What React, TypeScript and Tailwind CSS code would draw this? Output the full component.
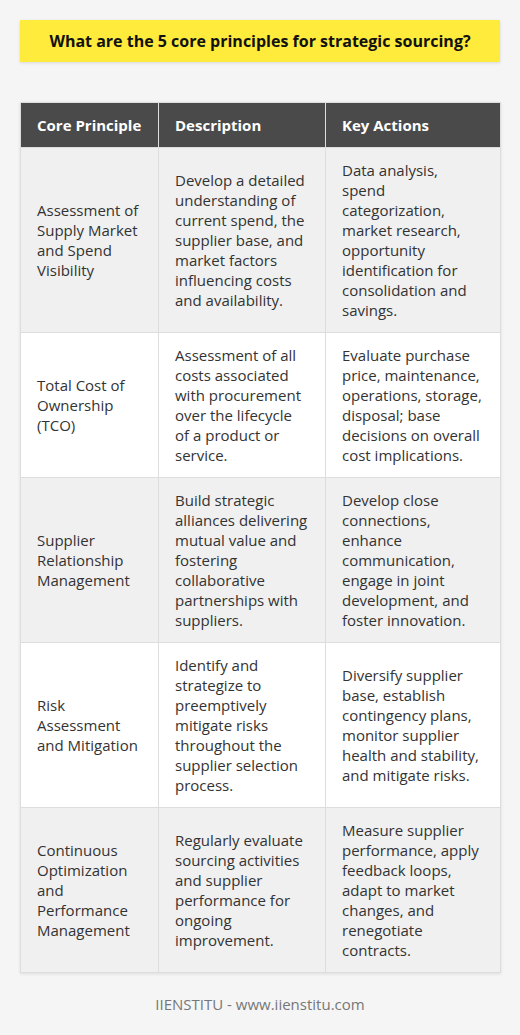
const rows = [
  {
    principle: 'Assessment of Supply Market and Spend Visibility',
    description:
      'Develop a detailed understanding of current spend, the supplier base, and market factors influencing costs and availability.',
    actions:
      'Data analysis, spend categorization, market research, opportunity identification for consolidation and savings.',
  },
  {
    principle: 'Total Cost of Ownership (TCO)',
    description:
      'Assessment of all costs associated with procurement over the lifecycle of a product or service.',
    actions:
      'Evaluate purchase price, maintenance, operations, storage, disposal; base decisions on overall cost implications.',
  },
  {
    principle: 'Supplier Relationship Management',
    description:
      'Build strategic alliances delivering mutual value and fostering collaborative partnerships with suppliers.',
    actions:
      'Develop close connections, enhance communication, engage in joint development, and foster innovation.',
  },
  {
    principle: 'Risk Assessment and Mitigation',
    description:
      'Identify and strategize to preemptively mitigate risks throughout the supplier selection process.',
    actions:
      'Diversify supplier base, establish contingency plans, monitor supplier health and stability, and mitigate risks.',
  },
  {
    principle: 'Continuous Optimization and Performance Management',
    description:
      'Regularly evaluate sourcing activities and supplier performance for ongoing improvement.',
    actions:
      'Measure supplier performance, apply feedback loops, adapt to market changes, and renegotiate contracts.',
  },
];

export default function App() {
  return (
    <div className="min-h-[1035px] bg-[#f5f5f5] px-5 pt-5 pb-5 font-['Open_Sans',sans-serif] text-[#333]">
      <div className="h-[42px] flex items-center justify-center bg-[#ffeb3b] shadow-[0_1px_3px_rgba(0,0,0,0.12)]">
        <h1 className="text-base font-bold text-[#111]">
          What are the 5 core principles for strategic sourcing?
        </h1>
      </div>

      <table className="mt-10 w-[480px] table-fixed border-collapse text-[15px] leading-5 shadow-[0_1px_3px_rgba(0,0,0,0.1)]">
        <colgroup>
          <col className="w-[138px]" />
          <col className="w-[167px]" />
          <col className="w-[175px]" />
        </colgroup>
        <thead>
          <tr className="bg-[#4a4a4a] text-white">
            <th className="border border-[#ddd] px-4 py-3 text-left font-bold">Core Principle</th>
            <th className="border border-[#ddd] px-4 py-3 text-left font-bold">Description</th>
            <th className="border border-[#ddd] px-4 py-3 text-left font-bold">Key Actions</th>
          </tr>
        </thead>
        <tbody>
          {rows.map((r, i) => (
            <tr key={r.principle} className={i % 2 === 0 ? 'bg-[#f0f0f0]' : 'bg-white'}>
              <td className="border border-[#ddd] px-4 py-3 align-middle">{r.principle}</td>
              <td className="border border-[#ddd] px-4 py-3 align-middle">{r.description}</td>
              <td className="border border-[#ddd] px-4 py-3 align-middle">{r.actions}</td>
            </tr>
          ))}
        </tbody>
      </table>

      <p className="mt-5 text-center text-[15px] text-[#777]">IIENSTITU - www.iienstitu.com</p>
    </div>
  );
}
